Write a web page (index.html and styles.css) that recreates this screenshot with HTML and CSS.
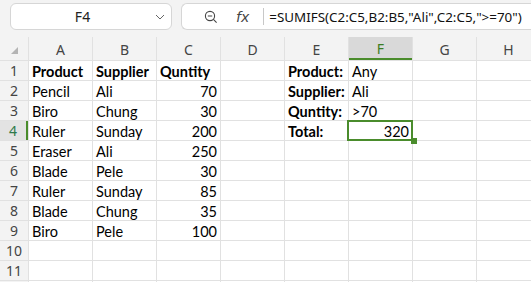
FILE: index.html
```html
<!DOCTYPE html>
<html>
<head>
<meta charset="utf-8">
<link rel="stylesheet" href="styles.css">
</head>
<body>
<div class="app">
  <div class="toolbar">
    <div class="namebox">
      <span class="nb-text">F4</span>
      <svg class="chev" width="10" height="6" viewBox="0 0 10 6"><path d="M1 1 L5 5 L9 1" fill="none" stroke="#666" stroke-width="1"/></svg>
    </div>
    <div class="formulabar">
      <svg class="zoomicon" width="14" height="14" viewBox="0 0 14 14"><circle cx="6" cy="6" r="4.6" fill="none" stroke="#444" stroke-width="1.1"/><path d="M3.8 6 H8.2 M9.4 9.4 L12.6 12.6" stroke="#444" stroke-width="1.1" fill="none"/></svg>
      <span class="fx">fx</span>
      <span class="sep"></span>
      <span class="formula">=SUMIFS(C2:C5,B2:B5,"Ali",C2:C5,"&gt;=70")</span>
    </div>
  </div>
  <div class="sheet">
    <div class="corner"><span class="tri"></span></div>
    <div class="ch">A</div><div class="ch">B</div><div class="ch">C</div><div class="ch">D</div><div class="ch">E</div><div class="ch sel">F</div><div class="ch">G</div><div class="ch">H</div>

    <div class="rh">1</div><div class="c b">Product</div><div class="c b">Supplier</div><div class="c b">Quntity</div><div class="c"></div><div class="c b">Product:</div><div class="c">Any</div><div class="c"></div><div class="c"></div>
    <div class="rh">2</div><div class="c">Pencil</div><div class="c">Ali</div><div class="c r">70</div><div class="c"></div><div class="c b">Supplier:</div><div class="c">Ali</div><div class="c"></div><div class="c"></div>
    <div class="rh">3</div><div class="c">Biro</div><div class="c">Chung</div><div class="c r">30</div><div class="c"></div><div class="c b">Quntity:</div><div class="c">&gt;70</div><div class="c"></div><div class="c"></div>
    <div class="rh sel">4</div><div class="c">Ruler</div><div class="c">Sunday</div><div class="c r">200</div><div class="c"></div><div class="c b">Total:</div><div class="c r active">320</div><div class="c"></div><div class="c"></div>
    <div class="rh">5</div><div class="c">Eraser</div><div class="c">Ali</div><div class="c r">250</div><div class="c"></div><div class="c"></div><div class="c"></div><div class="c"></div><div class="c"></div>
    <div class="rh">6</div><div class="c">Blade</div><div class="c">Pele</div><div class="c r">30</div><div class="c"></div><div class="c"></div><div class="c"></div><div class="c"></div><div class="c"></div>
    <div class="rh">7</div><div class="c">Ruler</div><div class="c">Sunday</div><div class="c r">85</div><div class="c"></div><div class="c"></div><div class="c"></div><div class="c"></div><div class="c"></div>
    <div class="rh">8</div><div class="c">Blade</div><div class="c">Chung</div><div class="c r">35</div><div class="c"></div><div class="c"></div><div class="c"></div><div class="c"></div><div class="c"></div>
    <div class="rh">9</div><div class="c">Biro</div><div class="c">Pele</div><div class="c r">100</div><div class="c"></div><div class="c"></div><div class="c"></div><div class="c"></div><div class="c"></div>
    <div class="rh">10</div><div class="c"></div><div class="c"></div><div class="c"></div><div class="c"></div><div class="c"></div><div class="c"></div><div class="c"></div><div class="c"></div>
    <div class="rh">11</div><div class="c"></div><div class="c"></div><div class="c"></div><div class="c"></div><div class="c"></div><div class="c"></div><div class="c"></div><div class="c"></div>
    <div class="rh"></div><div class="c"></div><div class="c"></div><div class="c"></div><div class="c"></div><div class="c"></div><div class="c"></div><div class="c"></div><div class="c"></div>
  </div>
</div>
</body>
</html>
```

FILE: styles.css
```css
html, body {
  margin: 0;
  padding: 0;
  width: 531px;
  height: 282px;
  overflow: hidden;
  background: #f3f3f3;
}
.app {
  width: 531px;
  height: 282px;
  overflow: hidden;
}
.toolbar {
  display: flex;
  height: 37px;
  box-sizing: border-box;
  padding: 3px 0 0 10px;
  gap: 9px;
}
.namebox {
  flex: none;
  box-sizing: border-box;
  width: 162px;
  height: 27px;
  background: #fff;
  border: 1px solid #d6d6d6;
  border-radius: 6px;
  display: flex;
  align-items: center;
  position: relative;
}
.nb-text {
  flex: 1;
  text-align: center;
  padding-right: 17px;
  font-family: "Noto Sans", sans-serif;
  font-size: 14px;
  color: #222;
}
.chev {
  position: absolute;
  right: 6px;
  top: 10px;
}
.formulabar {
  box-sizing: border-box;
  width: 400px;
  flex: none;
  height: 27px;
  background: #fff;
  border: 1px solid #d6d6d6;
  border-right: none;
  border-radius: 6px 0 0 6px;
  display: flex;
  align-items: center;
  padding-left: 22px;
}
.zoomicon {
  flex: none;
}
.fx {
  margin-left: 18px;
  font-family: "DejaVu Sans", sans-serif;
  font-style: italic;
  font-size: 14px;
  color: #444;
}
.sep {
  width: 1px;
  height: 17px;
  background: #c8c8c8;
  margin-left: 14px;
}
.formula {
  margin-left: 5px;
  font-family: "Noto Sans", sans-serif;
  font-size: 13.4px;
  color: #111;
  white-space: nowrap;
}
.sheet {
  display: grid;
  grid-template-columns: 28px repeat(8, 63px);
  grid-template-rows: 23px repeat(12, 19px);
  gap: 1px;
  background: #e1e1e1;
  width: 540px;
}
.corner {
  background: #f3f3f3;
  position: relative;
}
.tri {
  position: absolute;
  left: 11px;
  top: 10px;
  width: 0;
  height: 0;
  border-left: 7px solid transparent;
  border-bottom: 7px solid #b4b4b4;
}
.ch {
  background: #f3f3f3;
  font-family: "Noto Sans", sans-serif;
  font-size: 14px;
  color: #444;
  display: flex;
  align-items: center;
  justify-content: center;
  padding-top: 2px;
  box-sizing: border-box;
}
.ch.sel {
  background: #d9d9d9;
  color: #3a7d22;
  border-bottom: 2px solid #4a8c2c;
}
.rh {
  background: #f3f3f3;
  font-family: "Noto Sans", sans-serif;
  font-size: 14px;
  color: #444;
  display: flex;
  align-items: center;
  justify-content: center;
  box-sizing: border-box;
}
.rh.sel {
  background: #e3e3e3;
  color: #2f7a4a;
  border-right: 2px solid #4a8c2c;
}
.c {
  background: #fff;
  font-family: "Lato", sans-serif;
  font-size: 14.5px;
  color: #000;
  line-height: 19px;
  padding: 1px 3px 0 3px;
  white-space: nowrap;
  box-sizing: border-box;
  position: relative;
}
.c.b {
  font-weight: bold;
}
.c.r {
  text-align: right;
}
.c.active::after {
  content: "";
  position: absolute;
  top: -1px;
  left: -2px;
  right: -1px;
  bottom: -1px;
  border: 2px solid #4a8c2c;
}
.c.active::before {
  content: "";
  position: absolute;
  right: -5px;
  bottom: -4px;
  width: 6px;
  height: 6px;
  background: #4a8c2c;
  z-index: 2;
}
```
